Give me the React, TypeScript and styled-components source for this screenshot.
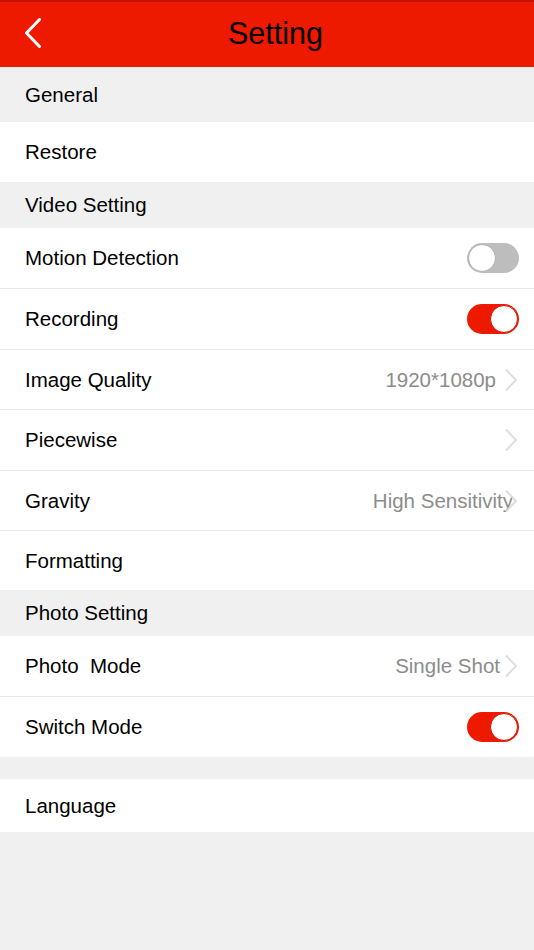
import React from "react";
import styled, { createGlobalStyle } from "styled-components";

const Global = createGlobalStyle`
  html, body { margin: 0; padding: 0; background: #f0f0f0; }
  body { font-family: "Liberation Sans", Arial, sans-serif; }
  * { box-sizing: border-box; }
`;

const Page = styled.div`
  width: 534px;
  min-height: 950px;
  background: #f0f0f0;
  display: flex;
  flex-direction: column;
`;

const Header = styled.header`
  height: 67px;
  background: #ee1a00;
  border-top: 2px solid #c01400;
  padding-bottom: 3px;
  display: grid;
  grid-template-columns: 60px 1fr 60px;
  align-items: center;
`;

const BackButton = styled.button`
  background: none;
  border: none;
  padding: 0 0 0 24px;
  height: 100%;
  display: flex;
  align-items: center;
  cursor: pointer;
`;

const Title = styled.h1`
  margin: 0 0 0 17px;
  text-align: center;
  font-size: 30.5px;
  font-weight: 400;
  color: #000;
  line-height: 1;
`;

const SectionHeader = styled.div<{ $h: number }>`
  height: ${(p) => p.$h}px;
  background: #f0f0f0;
  display: flex;
  align-items: center;
  padding-left: 25px;
  font-size: 20.5px;
  color: #000;
`;

const Row = styled.div<{ $h: number; $divider?: boolean }>`
  position: relative;
  height: ${(p) => p.$h}px;
  background: #fff;
  display: flex;
  align-items: center;
  padding: 0 15px 0 25px;
  border-bottom: ${(p) => (p.$divider ? "1px solid #e9e9e9" : "none")};
`;

const Label = styled.span`
  flex: 1;
  font-size: 20.5px;
  color: #000;
  white-space: pre;
`;

const Value = styled.span<{ $mr: number }>`
  font-size: 20.5px;
  color: #8c8c8c;
  margin-right: ${(p) => p.$mr}px;
`;

const Chevron = styled.svg`
  position: absolute;
  right: 16px;
  top: 50%;
  transform: translateY(-50%);
`;

const Toggle = styled.div<{ $on: boolean }>`
  width: 52px;
  height: 30px;
  border-radius: 15px;
  background: ${(p) => (p.$on ? "#ee1a00" : "#bdbdbd")};
  position: relative;
`;

const Knob = styled.div<{ $on: boolean }>`
  position: absolute;
  top: 1px;
  left: ${(p) => (p.$on ? "23px" : "1px")};
  width: 28px;
  height: 28px;
  border-radius: 50%;
  background: #fff;
  border: 1px solid ${(p) => (p.$on ? "#d01500" : "#b0b0b0")};
`;

const Gap = styled.div<{ $h: number }>`
  height: ${(p) => p.$h}px;
`;

const ChevronIcon = () => (
  <Chevron width="14" height="24" viewBox="0 0 14 24">
    <path d="M2 1.5 L12 12 L2 22.5" fill="none" stroke="#dedede" strokeWidth="2" />
  </Chevron>
);

const Switch = ({ on }: { on: boolean }) => (
  <Toggle $on={on}>
    <Knob $on={on} />
  </Toggle>
);

export default function App() {
  return (
    <Page>
      <Global />
      <Header>
        <BackButton aria-label="back">
          <svg width="18" height="30" viewBox="0 0 18 30">
            <path d="M15.5 1.5 L2.5 15 L15.5 28.5" fill="none" stroke="#fff" strokeWidth="3" strokeLinecap="round" strokeLinejoin="round" />
          </svg>
        </BackButton>
        <Title>Setting</Title>
        <div />
      </Header>

      <SectionHeader $h={55}>General</SectionHeader>
      <Row $h={60}>
        <Label>Restore</Label>
      </Row>

      <SectionHeader $h={46}>Video Setting</SectionHeader>
      <Row $h={61} $divider>
        <Label>Motion Detection</Label>
        <Switch on={false} />
      </Row>
      <Row $h={61} $divider>
        <Label>Recording</Label>
        <Switch on={true} />
      </Row>
      <Row $h={60} $divider>
        <Label>Image Quality</Label>
        <Value $mr={23}>1920*1080p</Value>
        <ChevronIcon />
      </Row>
      <Row $h={61} $divider>
        <Label>Piecewise</Label>
        <ChevronIcon />
      </Row>
      <Row $h={60} $divider>
        <Label>Gravity</Label>
        <Value $mr={6}>High Sensitivity</Value>
        <ChevronIcon />
      </Row>
      <Row $h={59}>
        <Label>Formatting</Label>
      </Row>

      <SectionHeader $h={46}>Photo Setting</SectionHeader>
      <Row $h={61} $divider>
        <Label>Photo  Mode</Label>
        <Value $mr={19}>Single Shot</Value>
        <ChevronIcon />
      </Row>
      <Row $h={60}>
        <Label>Switch Mode</Label>
        <Switch on={true} />
      </Row>

      <Gap $h={22} />
      <Row $h={53}>
        <Label>Language</Label>
      </Row>
    </Page>
  );
}
